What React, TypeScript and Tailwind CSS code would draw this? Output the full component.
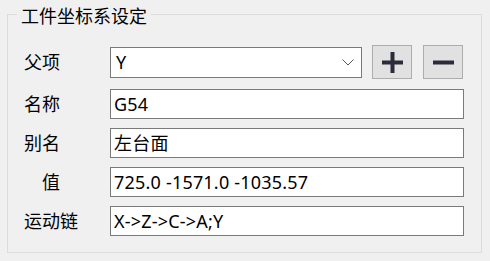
const fields = [
	{ label: "名称", value: "G54", indent: false },
	{ label: "别名", value: "左台面", indent: false },
	{ label: "值", value: "725.0 -1571.0 -1035.57", indent: true },
	{ label: "运动链", value: "X->Z->C->A;Y", indent: false },
]

function App() {
	return (
		<div
			className="w-[490px] h-[261px] bg-[#f0f0f0] pl-[7px] pt-[2px] text-[18px] text-black"
			style={{ fontFamily: '"Noto Sans", "Noto Sans CJK SC", sans-serif' }}
		>
			<fieldset className="w-[475px] h-[251px] border border-[#dcdcdc]">
				<legend className="ml-[9px] px-[4px] leading-[24px]">
					<span className="block translate-y-[2px]">工件坐标系设定</span>
				</legend>
				<div className="pl-[16px] pt-[19px]">
					{/* parent row */}
					<div className="flex items-center h-[34px]">
						<div className="w-[86px] leading-[24px]">父项</div>
						<div className="w-[252px] h-[31px] bg-white border border-[#7a7a7a] flex items-center pl-[5px] pr-[7px]">
							<span className="flex-1 leading-[24px]">Y</span>
							<svg width="12" height="7" viewBox="0 0 12 7">
								<path d="M0.5 0.5 L6 6 L11.5 0.5" fill="none" stroke="#555" strokeWidth="1" />
							</svg>
						</div>
						<button className="ml-[10px] w-[40px] h-[34px] bg-[#e1e1e1] border border-[#adadad] flex items-center justify-center">
							<svg width="21" height="21" viewBox="0 0 21 21">
								<path d="M0 10.5 H21 M10.5 0 V21" stroke="#2b2b3c" strokeWidth="4" />
							</svg>
						</button>
						<button className="ml-[11px] w-[40px] h-[34px] bg-[#e1e1e1] border border-[#adadad] flex items-center justify-center">
							<svg width="21" height="21" viewBox="0 0 21 21">
								<path d="M0 10.5 H21" stroke="#2b2b3c" strokeWidth="4" />
							</svg>
						</button>
					</div>

					<div className="mt-[10px] flex flex-col gap-[9px]">
						{fields.map((f) => (
							<div key={f.label} className="flex items-center h-[30px]">
								<div className={`w-[86px] leading-[24px] ${f.indent ? "pl-[18px]" : ""}`}>
									{f.label}
								</div>
								<div className="w-[354px] h-[30px] bg-white border border-[#7a7a7a] flex items-center pl-[3px]">
									<span className="leading-[24px] tracking-[0.2px]">{f.value}</span>
								</div>
							</div>
						))}
					</div>
				</div>
			</fieldset>
		</div>
	)
}

export default App
